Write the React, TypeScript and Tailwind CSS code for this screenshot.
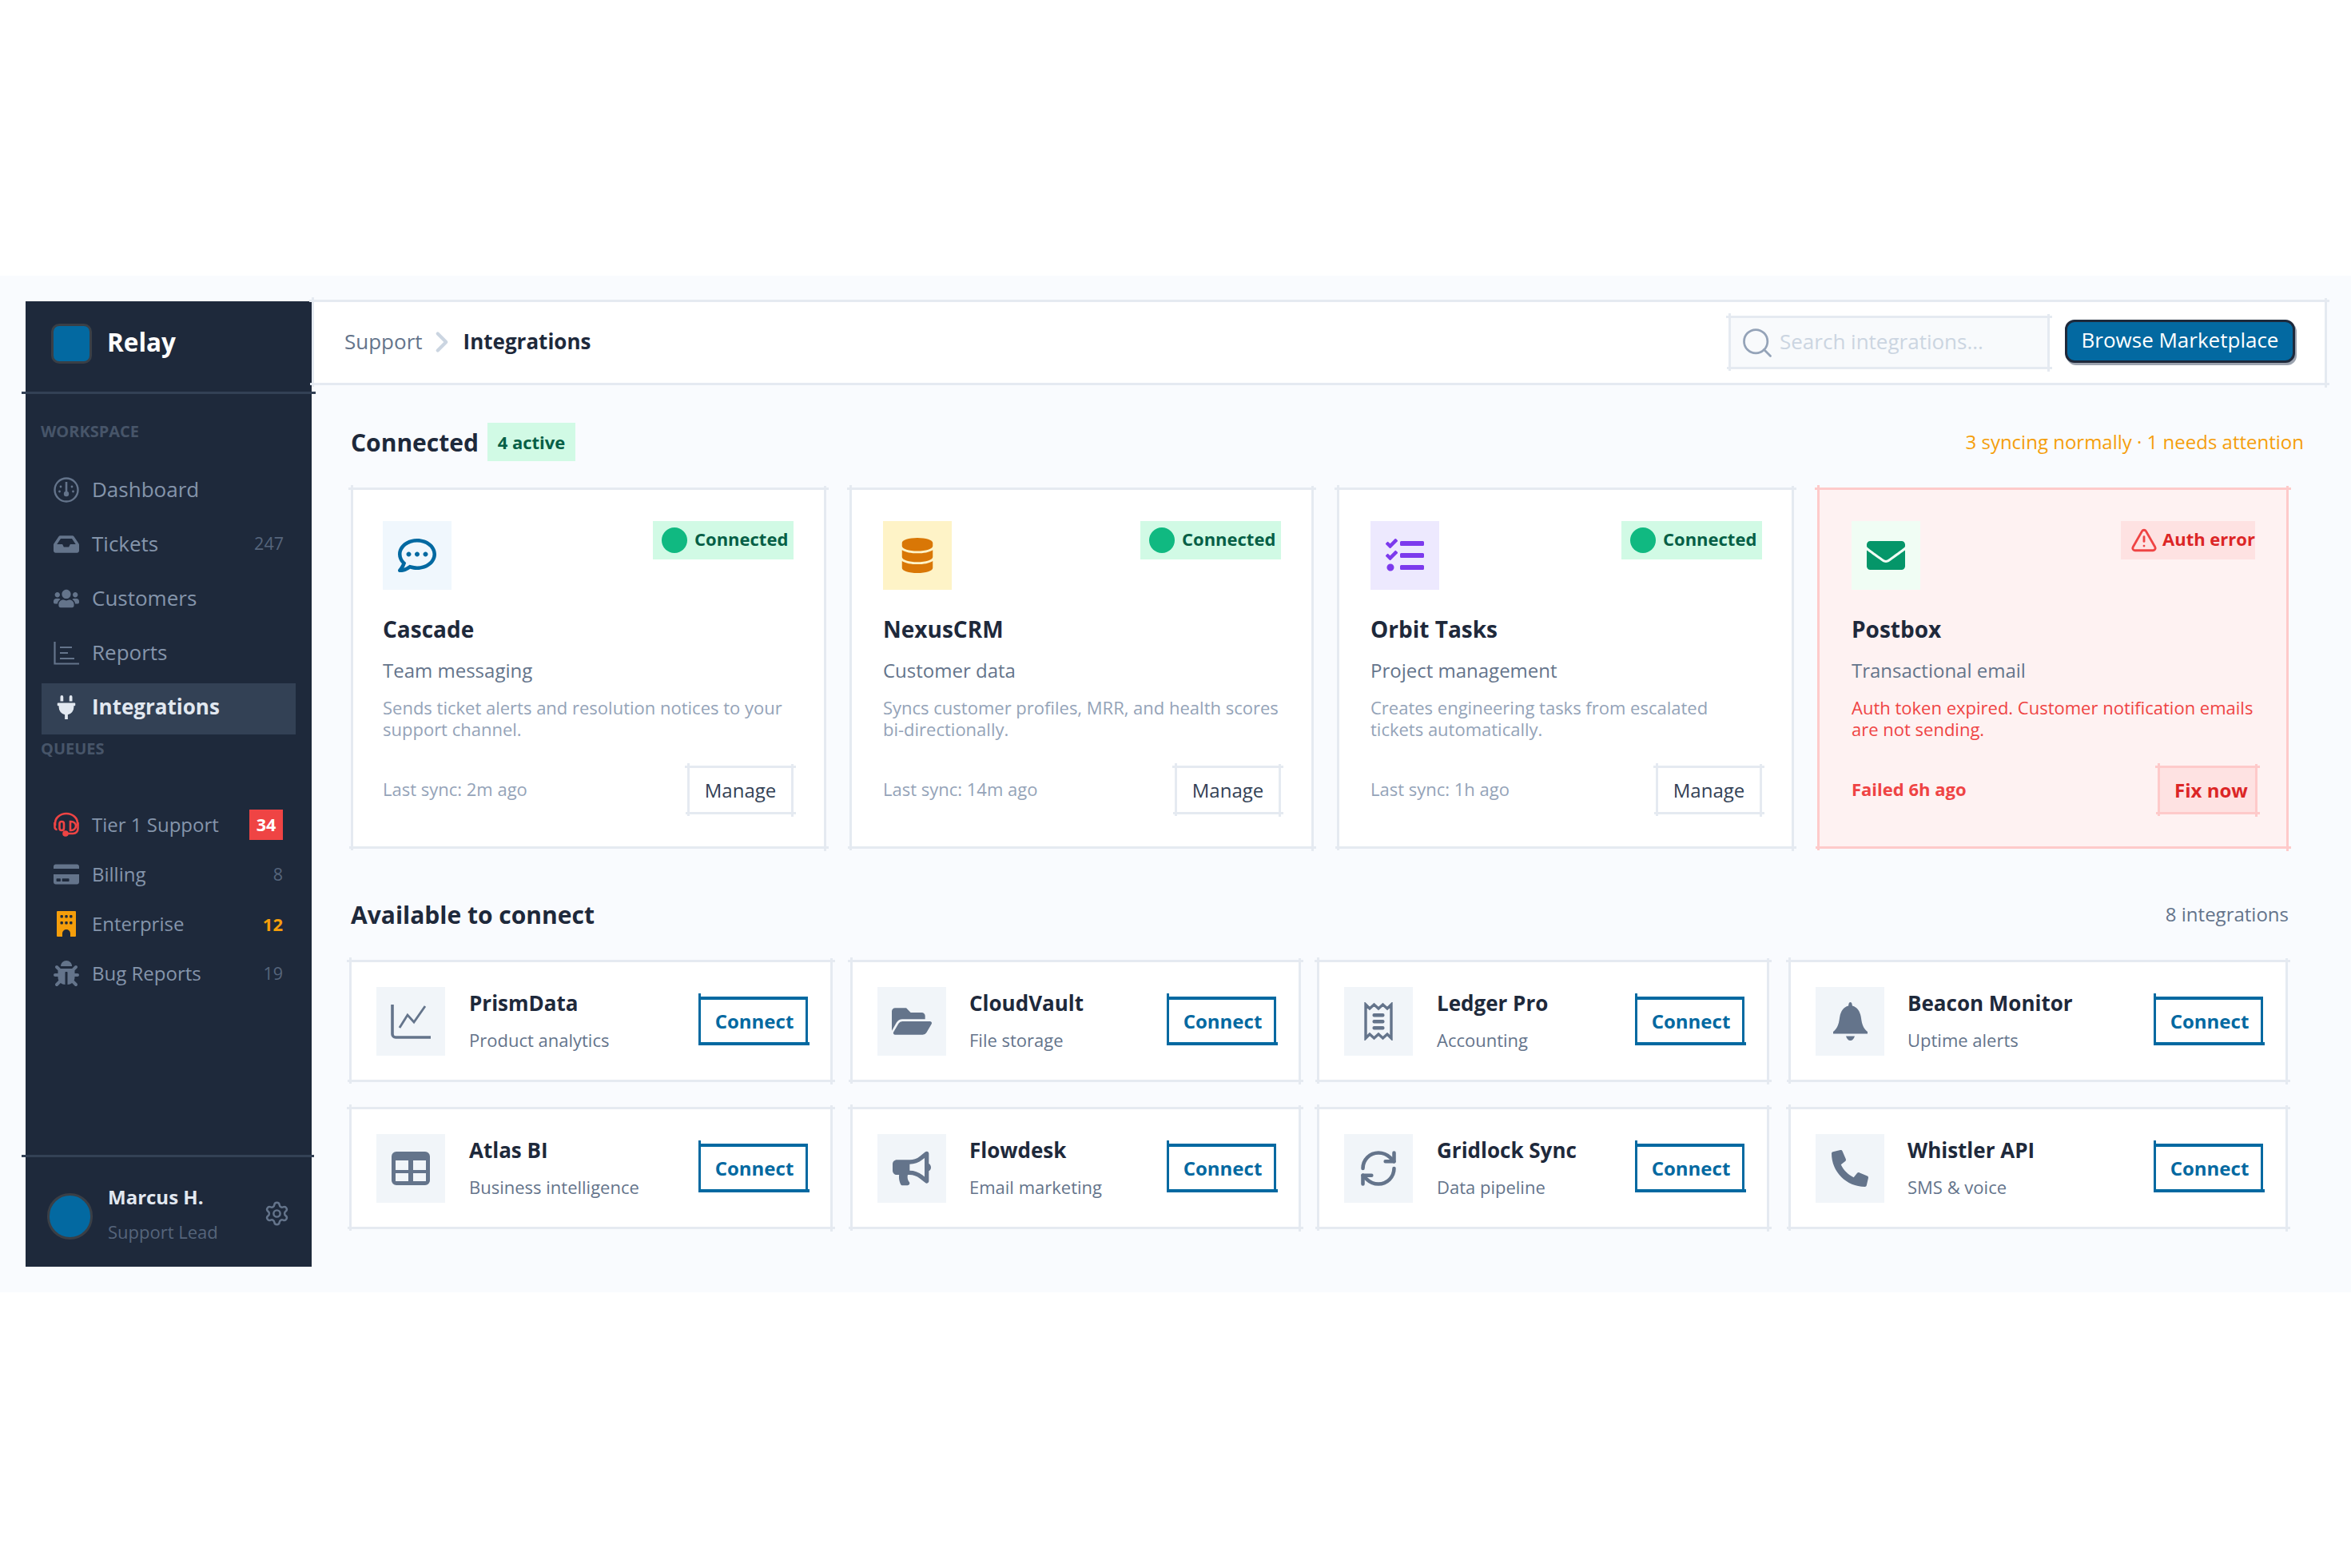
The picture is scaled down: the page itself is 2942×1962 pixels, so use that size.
import React from "react";
import {
  FaInbox, FaUsers, FaPlug, FaCreditCard, FaBug, FaRegCommentDots, FaDatabase, FaTasks,
  FaEnvelope, FaFolderOpen, FaBullhorn, FaPhone,
} from "react-icons/fa";
import { Settings, TriangleAlert, Search, ChevronRight, RefreshCw } from "lucide-react";

const font = { fontFamily: '"Open Sans", "Noto Sans", sans-serif' };

function Frame({ color = "bg-[#e5eaf1]" }: { color?: string }) {
  return (
    <>
      <span className={`absolute -left-[3px] -right-[3px] top-0 h-[3px] ${color}`} />
      <span className={`absolute -left-[2px] -right-[3px] bottom-0 h-[3px] ${color}`} />
      <span className={`absolute -top-[3px] -bottom-[2px] left-0 w-[3px] ${color}`} />
      <span className={`absolute -top-[2px] -bottom-[3px] right-0 w-[3px] ${color}`} />
    </>
  );
}

function DashIcon() {
  return (
    <svg width="32" height="32" viewBox="0 0 32 32" fill="none">
      <circle cx="16" cy="16" r="14.5" stroke="#64748b" strokeWidth="2.4" />
      <path d="M16 6v13" stroke="#64748b" strokeWidth="2.6" />
      <circle cx="16" cy="21" r="3.2" fill="#64748b" />
      <circle cx="9" cy="12" r="1.4" fill="#64748b" />
      <circle cx="23" cy="12" r="1.4" fill="#64748b" />
      <circle cx="7.5" cy="18" r="1.4" fill="#64748b" />
      <circle cx="24.5" cy="18" r="1.4" fill="#64748b" />
    </svg>
  );
}
function ReportIcon() {
  return (
    <svg width="32" height="30" viewBox="0 0 32 30" fill="none" stroke="#64748b" strokeWidth="2.2">
      <path d="M1.5 1v27.5H32" />
      <path d="M8 8h15M8 15h10M8 22h18" />
    </svg>
  );
}
function HeadsetIcon() {
  return (
    <svg width="32" height="32" viewBox="0 0 32 32" fill="none" stroke="#ef4444" strokeWidth="2.6">
      <path d="M2 17v-3a14 12 0 0 1 28 0v3" />
      <rect x="7.5" y="12" width="5.5" height="11" rx="2.7" />
      <path d="M21 12h1a6 5.5 0 0 1 0 11h-1z" />
      <path d="M1.5 13v6a3 3 0 0 0 3 3M30.5 13v8a6 6 0 0 1-6 6H15" />
      <circle cx="15" cy="27" r="2.5" fill="#ef4444" />
    </svg>
  );
}
function BuildingIcon() {
  return (
    <svg width="24" height="32" viewBox="0 0 24 32">
      <path
        fill="#f59e0b"
        fillRule="evenodd"
        d="M1 0h22a1 1 0 0 1 1 1v30a1 1 0 0 1-1 1h-6v-4a5 5 0 0 0-10 0v4H1a1 1 0 0 1-1-1V1a1 1 0 0 1 1-1z"
      />
      <g fill="#1e293b">
        <rect x="4.5" y="5" width="3.4" height="3.4" rx="1" />
        <rect x="10.3" y="5" width="3.4" height="3.4" rx="1" />
        <rect x="16.1" y="5" width="3.4" height="3.4" rx="1" />
        <rect x="4.5" y="13" width="3.4" height="3.4" rx="1" />
        <rect x="10.3" y="13" width="3.4" height="3.4" rx="1" />
        <rect x="16.1" y="13" width="3.4" height="3.4" rx="1" />
      </g>
    </svg>
  );
}
function ChartIcon() {
  return (
    <svg width="50" height="44" viewBox="0 0 50 44" fill="none" stroke="#64748b">
      <path d="M2 1v37a4 4 0 0 0 4 4h44" strokeWidth="3.6" />
      <path d="M11 30l10-16 8 9 14-20" strokeWidth="2.8" />
    </svg>
  );
}
function TableIcon() {
  return (
    <svg width="48" height="42" viewBox="0 0 48 42">
      <path
        fillRule="evenodd"
        fill="#64748b"
        d="M6 0h36a6 6 0 0 1 6 6v30a6 6 0 0 1-6 6H6a6 6 0 0 1-6-6V6a6 6 0 0 1 6-6zM5 11v12h16V11H5zm22 0v12h16V11H27zM5 27v10h16V27H5zm22 0v10h16V27H27z"
      />
    </svg>
  );
}
function ReceiptIcon() {
  return (
    <svg width="36" height="48" viewBox="0 0 36 48" fill="none">
      <path d="M2 3l5 5 5.500-5 5.500 5 5.500-5 5.500 5 5-5v42l-5-5-5.500 5-5.500-5-5.500 5-5.500-5-5 5z" stroke="#64748b" strokeWidth="3.4" />
      <rect x="10.500" y="14" width="15" height="4.500" rx="2" fill="#64748b" />
      <rect x="10.500" y="22" width="15" height="4.500" rx="2" fill="#64748b" />
      <rect x="10.500" y="30" width="15" height="4.500" rx="2" fill="#64748b" />
    </svg>
  );
}
function BellIcon() {
  return (
    <svg width="43" height="48" viewBox="0 0 43 48">
      <path
        fill="#64748b"
        d="M21.500 0c1.300 0 2.200 1.300 2.400 4.500C31 6.500 34 12.500 35 20c1 8 3 13 8 17v2.500H0V37c5-4 7-9 8-17 1-7.500 4-13.500 11.100-15.500C19.300 1.300 20.200 0 21.500 0zM16 42.500h11c-1 3.500-3 5.500-5.500 5.500S17 46 16 42.500z"
      />
    </svg>
  );
}

function SideLabel({ text }: { text: string }) {
  return <div className="h-[28px] pl-[18px] text-[20px] font-bold leading-[28px] text-[#475569]">{text}</div>;
}

function NavRow({ icon, label, count, active }: { icon: React.ReactNode; label: string; count?: string; active?: boolean }) {
  return (
    <div className={`flex h-[64px] items-center px-[15px] pb-[5px] ${active ? "bg-[#334155]" : ""}`}>
      <span className="flex w-[32px] justify-center">{icon}</span>
      <span className={`ml-[16px] text-[26px] ${active ? "font-bold text-[#e2e8f0]" : "text-[#8595ab]"}`}>{label}</span>
      {count && <span className="ml-auto text-[21.5px] text-[#56657b]">{count}</span>}
    </div>
  );
}

function QueueRow({ icon, label, right }: { icon: React.ReactNode; label: string; right: React.ReactNode }) {
  return (
    <div className="flex h-[62px] items-center pl-[15px] pr-[16px]">
      <span className="flex w-[32px] justify-center">{icon}</span>
      <span className="ml-[16px] text-[24px] text-[#8595ab]">{label}</span>
      <span className="ml-auto">{right}</span>
    </div>
  );
}

function Sidebar() {
  return (
    <aside className="flex h-[1208px] w-[358px] shrink-0 flex-col bg-[#1e293b]">
      <div className="relative flex h-[116px] items-center pb-[10px] pl-[32px]">
        <span className="h-[50px] w-[51px] rounded-[10px] border-[3px] border-[#3a3f46] bg-[#0369a1]" />
        <span className="ml-[19px] -mt-[5px] text-[31.5px] font-bold text-white">Relay</span>
        <span className="absolute -left-[5px] -right-[5px] bottom-0 z-10 h-[3px] bg-[#334155]" />
      </div>
      <div className="flex flex-1 flex-col px-[1px]">
        <div className="mt-[33px]">
          <SideLabel text="WORKSPACE" />
        </div>
        <div className="mx-[19px] mt-[29px] flex flex-col gap-[4px]">
          <NavRow icon={<DashIcon />} label="Dashboard" />
          <NavRow icon={<FaInbox size={32} color="#64748b" />} label="Tickets" count="247" />
          <NavRow icon={<FaUsers size={32} color="#64748b" />} label="Customers" />
          <NavRow icon={<ReportIcon />} label="Reports" />
          <NavRow icon={<FaPlug size={30} color="#e2e8f0" />} label="Integrations" active />
        </div>
        <div className="mt-[4px]">
          <SideLabel text="QUEUES" />
        </div>
        <div className="mx-[19px] mt-[50px] flex flex-col">
          <QueueRow
            icon={<HeadsetIcon />}
            label="Tier 1 Support"
            right={<span className="flex h-[38px] w-[42px] items-center justify-center bg-[#ef4444] text-[21.5px] font-bold text-white">34</span>}
          />
          <QueueRow icon={<FaCreditCard size={32} color="#64748b" />} label="Billing" right={<span className="text-[21.5px] text-[#56657b]">8</span>} />
          <QueueRow icon={<BuildingIcon />} label="Enterprise" right={<span className="text-[22px] font-bold text-[#f59e0b]">12</span>} />
          <QueueRow icon={<FaBug size={32} color="#64748b" />} label="Bug Reports" right={<span className="text-[21.5px] text-[#56657b]">19</span>} />
        </div>
      </div>
      <div className="relative flex h-[140px] items-start pl-[27px] pr-[27px]">
        <span className="absolute -left-[5px] -right-[3px] top-0 z-10 h-[3px] bg-[#334155]" />
        <span className="mt-[48px] h-[58px] w-[57px] rounded-full border-[3px] border-[#3a3f46] bg-[#0369a1]" />
        <div className="ml-[19px] mt-[35px] flex flex-col">
          <span className="text-[24px] font-bold leading-[36px] text-[#e2e8f0]">Marcus H.</span>
          <span className="mt-[8px] text-[22px] leading-[34px] text-[#56657b]">Support Lead</span>
        </div>
        <Settings size={33} color="#64748b" strokeWidth={1.8} className="ml-auto mt-[57px]" />
      </div>
    </aside>
  );
}

function Header() {
  return (
    <header className="relative -mt-[2px] flex h-[107px] items-center bg-white pl-[41px] pr-[40px]">
      <Frame />
      <span className="-mt-[3px] text-[26px] text-[#64748b]">Support</span>
      <ChevronRight size={42} color="#cbd5e1" strokeWidth={2.4} className="-mt-[1px] ml-[3px]" />
      <span className="-mt-[3px] ml-[6px] text-[26px] font-bold text-[#1e293b]">Integrations</span>
      <div className="relative ml-auto flex h-[67px] w-[402px] items-center bg-[#f8fafc] pl-[14px]">
        <Frame />
        <Search size={44} color="#94a3b8" strokeWidth={1.5} />
        <span className="-mt-[2px] ml-[6px] text-[26px] text-[#cbd5e1]">Search integrations...</span>
      </div>
      <button className="-mt-[3px] ml-[19px] flex h-[54px] w-[288px] items-center justify-center rounded-[12px] border-[3px] border-[#1e293b] bg-[#0369a1] pb-[4px] text-[26px] text-white shadow-[2px_3px_0_#9ca3af]">
        Browse Marketplace
      </button>
    </header>
  );
}

type C = {
  name: string; sub: string; desc: string[]; sync: string; icon: React.ReactNode; iconBg: string; pad: string;
};

const connected: C[] = [
  { name: "Cascade", sub: "Team messaging", desc: ["Sends ticket alerts and resolution notices to your", "support channel."], sync: "Last sync: 2m ago", icon: <FaRegCommentDots size={48} color="#0369a1" />, iconBg: "bg-[#f0f7fd]", pad: "pl-[40px] pr-[41px]" },
  { name: "NexusCRM", sub: "Customer data", desc: ["Syncs customer profiles, MRR, and health scores", "bi-directionally."], sync: "Last sync: 14m ago", icon: <FaDatabase size={44} color="#d97706" />, iconBg: "bg-[#fef3c7]", pad: "pl-[42px] pr-[41px]" },
  { name: "Orbit Tasks", sub: "Project management", desc: ["Creates engineering tasks from escalated", "tickets automatically."], sync: "Last sync: 1h ago", icon: <FaTasks size={48} color="#7c3aed" />, iconBg: "bg-[#ede9fe]", pad: "pl-[42px] pr-[40px]" },
];

function ConnectedCard({ c }: { c: C }) {
  return (
    <div className={`relative flex flex-col bg-white pt-[42px] ${c.pad}`}>
      <Frame />
      <div className="flex items-start justify-between">
        <span className={`flex h-[86px] w-[86px] items-center justify-center ${c.iconBg}`}>{c.icon}</span>
        <span className="flex h-[48px] w-[176px] items-center bg-[#d1fae5] pb-[3px] pl-[11px] text-[22px] font-bold text-[#065f46]">
          <span className="mr-[9px] mt-[3px] h-[32px] w-[32px] rounded-full bg-[#10b981]" />
          Connected
        </span>
      </div>
      <div className="mt-[29px] text-[28px] font-bold leading-[41px] text-[#1e293b]">{c.name}</div>
      <div className="mt-[14px] text-[24px] leading-[34px] text-[#64748b]">{c.sub}</div>
      <div className="mt-[16px] text-[22px] leading-[27px] text-[#94a3b8]">
        {c.desc.map((d) => (
          <div key={d} className="whitespace-nowrap">{d}</div>
        ))}
      </div>
      <div className="mt-[32px] flex items-center justify-between">
        <span className="-mt-[3px] text-[22px] text-[#94a3b8]">{c.sync}</span>
        <button className="relative flex h-[61px] w-[133px] items-center justify-center bg-white text-[24px] text-[#334155]">
          <Frame />
          Manage
        </button>
      </div>
    </div>
  );
}

function ErrorCard() {
  return (
    <div className="relative flex flex-col bg-[#fef2f2] pl-[43px] pr-[42px] pt-[42px]">
      <Frame color="bg-[#fecaca]" />
      <div className="flex items-start justify-between">
        <span className="flex h-[86px] w-[86px] items-center justify-center bg-[#f0fdf4]">
          <FaEnvelope size={48} color="#059669" />
        </span>
        <span className="flex h-[48px] w-[168px] items-center bg-[#fee2e2] pb-[3px] pl-[12px] text-[22px] font-bold text-[#dc2626]">
          <TriangleAlert size={34} color="#ef4444" strokeWidth={2} className="mr-[6px] mt-[3px]" />
          Auth error
        </span>
      </div>
      <div className="mt-[29px] text-[28px] font-bold leading-[41px] text-[#1e293b]">Postbox</div>
      <div className="mt-[14px] text-[24px] leading-[34px] text-[#64748b]">Transactional email</div>
      <div className="mt-[16px] text-[22px] leading-[27px] text-[#ef4444]">
        <div className="whitespace-nowrap">Auth token expired. Customer notification emails</div>
        <div className="whitespace-nowrap">are not sending.</div>
      </div>
      <div className="mt-[32px] flex items-center justify-between">
        <span className="-mt-[3px] text-[22px] font-bold text-[#ef4444]">Failed 6h ago</span>
        <button className="relative -mr-[3px] flex h-[61px] w-[125px] items-center justify-center bg-[#fee2e2] pl-[9px] text-[24px] font-bold text-[#dc2626]">
          <Frame color="bg-[#fecaca]" />
          Fix now
        </button>
      </div>
    </div>
  );
}

const avail: { name: string; sub: string; icon: React.ReactNode; shift?: string; gap?: string }[] = [
  { name: "PrismData", sub: "Product analytics", icon: <ChartIcon /> },
  { name: "CloudVault", sub: "File storage", icon: <FaFolderOpen size={50} color="#64748b" />, gap: "ml-[29px]" },
  { name: "Ledger Pro", sub: "Accounting", icon: <ReceiptIcon />, shift: "-ml-[2px] mr-[2px]" },
  { name: "Beacon Monitor", sub: "Uptime alerts", icon: <BellIcon />, gap: "ml-[29px]" },
  { name: "Atlas BI", sub: "Business intelligence", icon: <TableIcon /> },
  { name: "Flowdesk", sub: "Email marketing", icon: <FaBullhorn size={48} color="#64748b" />, gap: "ml-[29px]" },
  { name: "Gridlock Sync", sub: "Data pipeline", icon: <RefreshCw size={52} color="#64748b" strokeWidth={2.1} />, shift: "-ml-[2px] mr-[2px]" },
  { name: "Whistler API", sub: "SMS & voice", icon: <FaPhone size={46} color="#64748b" className="-scale-x-100" />, gap: "ml-[29px]" },
];

function AvailCard({ a }: { a: (typeof avail)[number] }) {
  return (
    <div className={`relative flex h-[153px] items-center bg-white pl-[34px] pr-[31px] ${a.shift ?? ""}`}>
      <Frame />
      <span className="flex h-[86px] w-[86px] shrink-0 items-center justify-center bg-[#f1f5f9]">{a.icon}</span>
      <div className={`${a.gap ?? "ml-[30px]"} flex flex-col`}>
        <span className="whitespace-nowrap text-[26px] font-bold leading-[36px] text-[#1e293b]">{a.name}</span>
        <span className="mt-[11px] whitespace-nowrap text-[22px] leading-[34px] text-[#64748b]">{a.sub}</span>
      </div>
      <button className="relative ml-auto flex h-[61px] w-[137px] items-center justify-center border-x-[3px] border-y-[4px] border-[#0369a1] bg-white pl-[3px] text-[24px] font-bold text-[#0369a1]">
        <span className="absolute -left-[3px] -top-[8px] h-[4px] w-[3px] bg-[#0369a1]" />
        <span className="absolute -bottom-[4px] -right-[5px] h-[4px] w-[3px] bg-[#0369a1]" />
        Connect
      </button>
    </div>
  );
}

export default function App() {
  return (
    <div style={font} className="h-[1962px] w-full bg-white pt-[345px]">
      <div className="flex h-[1272px] bg-[#f9fbfe] pl-[32px] pr-[30px] pt-[32px]">
        <Sidebar />
        <main className="min-w-0 flex-1">
          <Header />
          <div className="pl-[49px]">
            <div className="mt-[47px] flex h-[48px] items-center pr-[29px]">
              <span className="text-[30px] font-bold text-[#1e293b]">Connected</span>
              <span className="ml-[11px] flex h-[48px] w-[110px] items-center justify-center bg-[#d1fae5] text-[22px] font-bold text-[#065f46]">4 active</span>
              <span className="ml-auto text-[24px] text-[#f59e0b]">3 syncing normally · 1 needs attention</span>
            </div>
            <div className="mt-[33px] grid h-[452px] grid-cols-[595px_581px_572px_590px] gap-[29px]">
              {connected.map((c) => (
                <ConnectedCard key={c.name} c={c} />
              ))}
              <ErrorCard />
            </div>
            <div className="mt-[62px] flex h-[40px] w-[2425px] items-center justify-between">
              <span className="text-[30px] font-bold text-[#1e293b]">Available to connect</span>
              <span className="text-[24px] text-[#64748b]">8 integrations</span>
            </div>
            <div className="-ml-[2px] mt-[37px] grid grid-cols-[605px_564px_566px_625px] gap-x-[22px] gap-y-[31px]">
              {avail.map((a) => (
                <AvailCard key={a.name} a={a} />
              ))}
            </div>
          </div>
        </main>
      </div>
    </div>
  );
}
